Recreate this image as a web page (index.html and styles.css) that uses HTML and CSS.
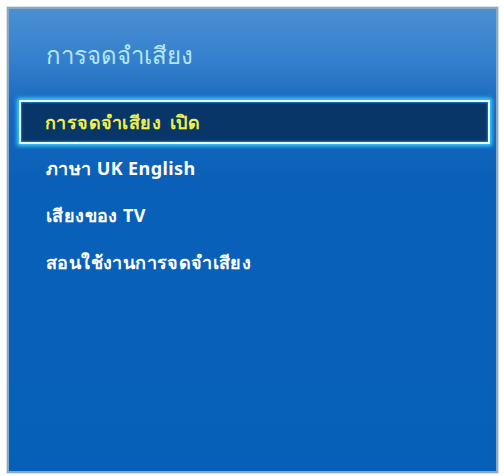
FILE: index.html
```html
<!DOCTYPE html>
<html lang="th">
<head>
<meta charset="utf-8">
<link rel="stylesheet" href="styles.css">
</head>
<body>
<div class="panel">
  <div class="title">การจดจำเสียง</div>
  <ul class="menu">
    <li class="item selected"><span>การจดจำเสียง เปิด</span></li>
    <li class="item">ภาษา UK English</li>
    <li class="item">เสียงของ TV</li>
    <li class="item">สอนใช้งานการจดจำเสียง</li>
  </ul>
</div>
</body>
</html>
```
FILE: styles.css
```css
html, body {
  margin: 0;
  padding: 0;
  background: #ffffff;
  width: 504px;
  height: 476px;
  overflow: hidden;
}
body {
  font-family: "Noto Sans", "Liberation Sans", sans-serif;
  padding: 7px 6px 3px 7px;
  box-sizing: border-box;
}
.panel {
  box-sizing: border-box;
  height: 466px;
  border: 2px solid #8aa7c4;
  outline: 1px solid #d6e4f0;
  background: linear-gradient(to bottom, #4a8fd2 0px, #3580cd 50px, #1868be 100px, #0a60b8 170px, #0760b8 100%);
  display: flex;
  flex-direction: column;
  padding: 0 6px 0 10px;
}
.title {
  color: #b3e6f6;
  font-size: 24px;
  padding: 31px 0 0 27px;
  height: 91px;
  line-height: 30px;
  box-sizing: border-box;
  flex-shrink: 0;
}
.menu {
  list-style: none;
  margin: 0;
  padding: 0;
  display: flex;
  flex-direction: column;
}
.item {
  color: #ffffff;
  font-weight: bold;
  font-size: 18px;
  height: 47px;
  line-height: 46px;
  padding-left: 27px;
  letter-spacing: 0.4px;
  white-space: nowrap;
}
.selected {
  height: 44px;
  line-height: 40px;
  padding-left: 24px;
  margin-bottom: 1px;
  background: #093668;
  border: 2px solid #e8fbff;
  box-shadow: 0 0 4px 2px #3fd0ff, inset 0 0 2px 1px #1a78c6;
  color: #eef04c;
  box-sizing: border-box;
  word-spacing: 4px;
}
```
